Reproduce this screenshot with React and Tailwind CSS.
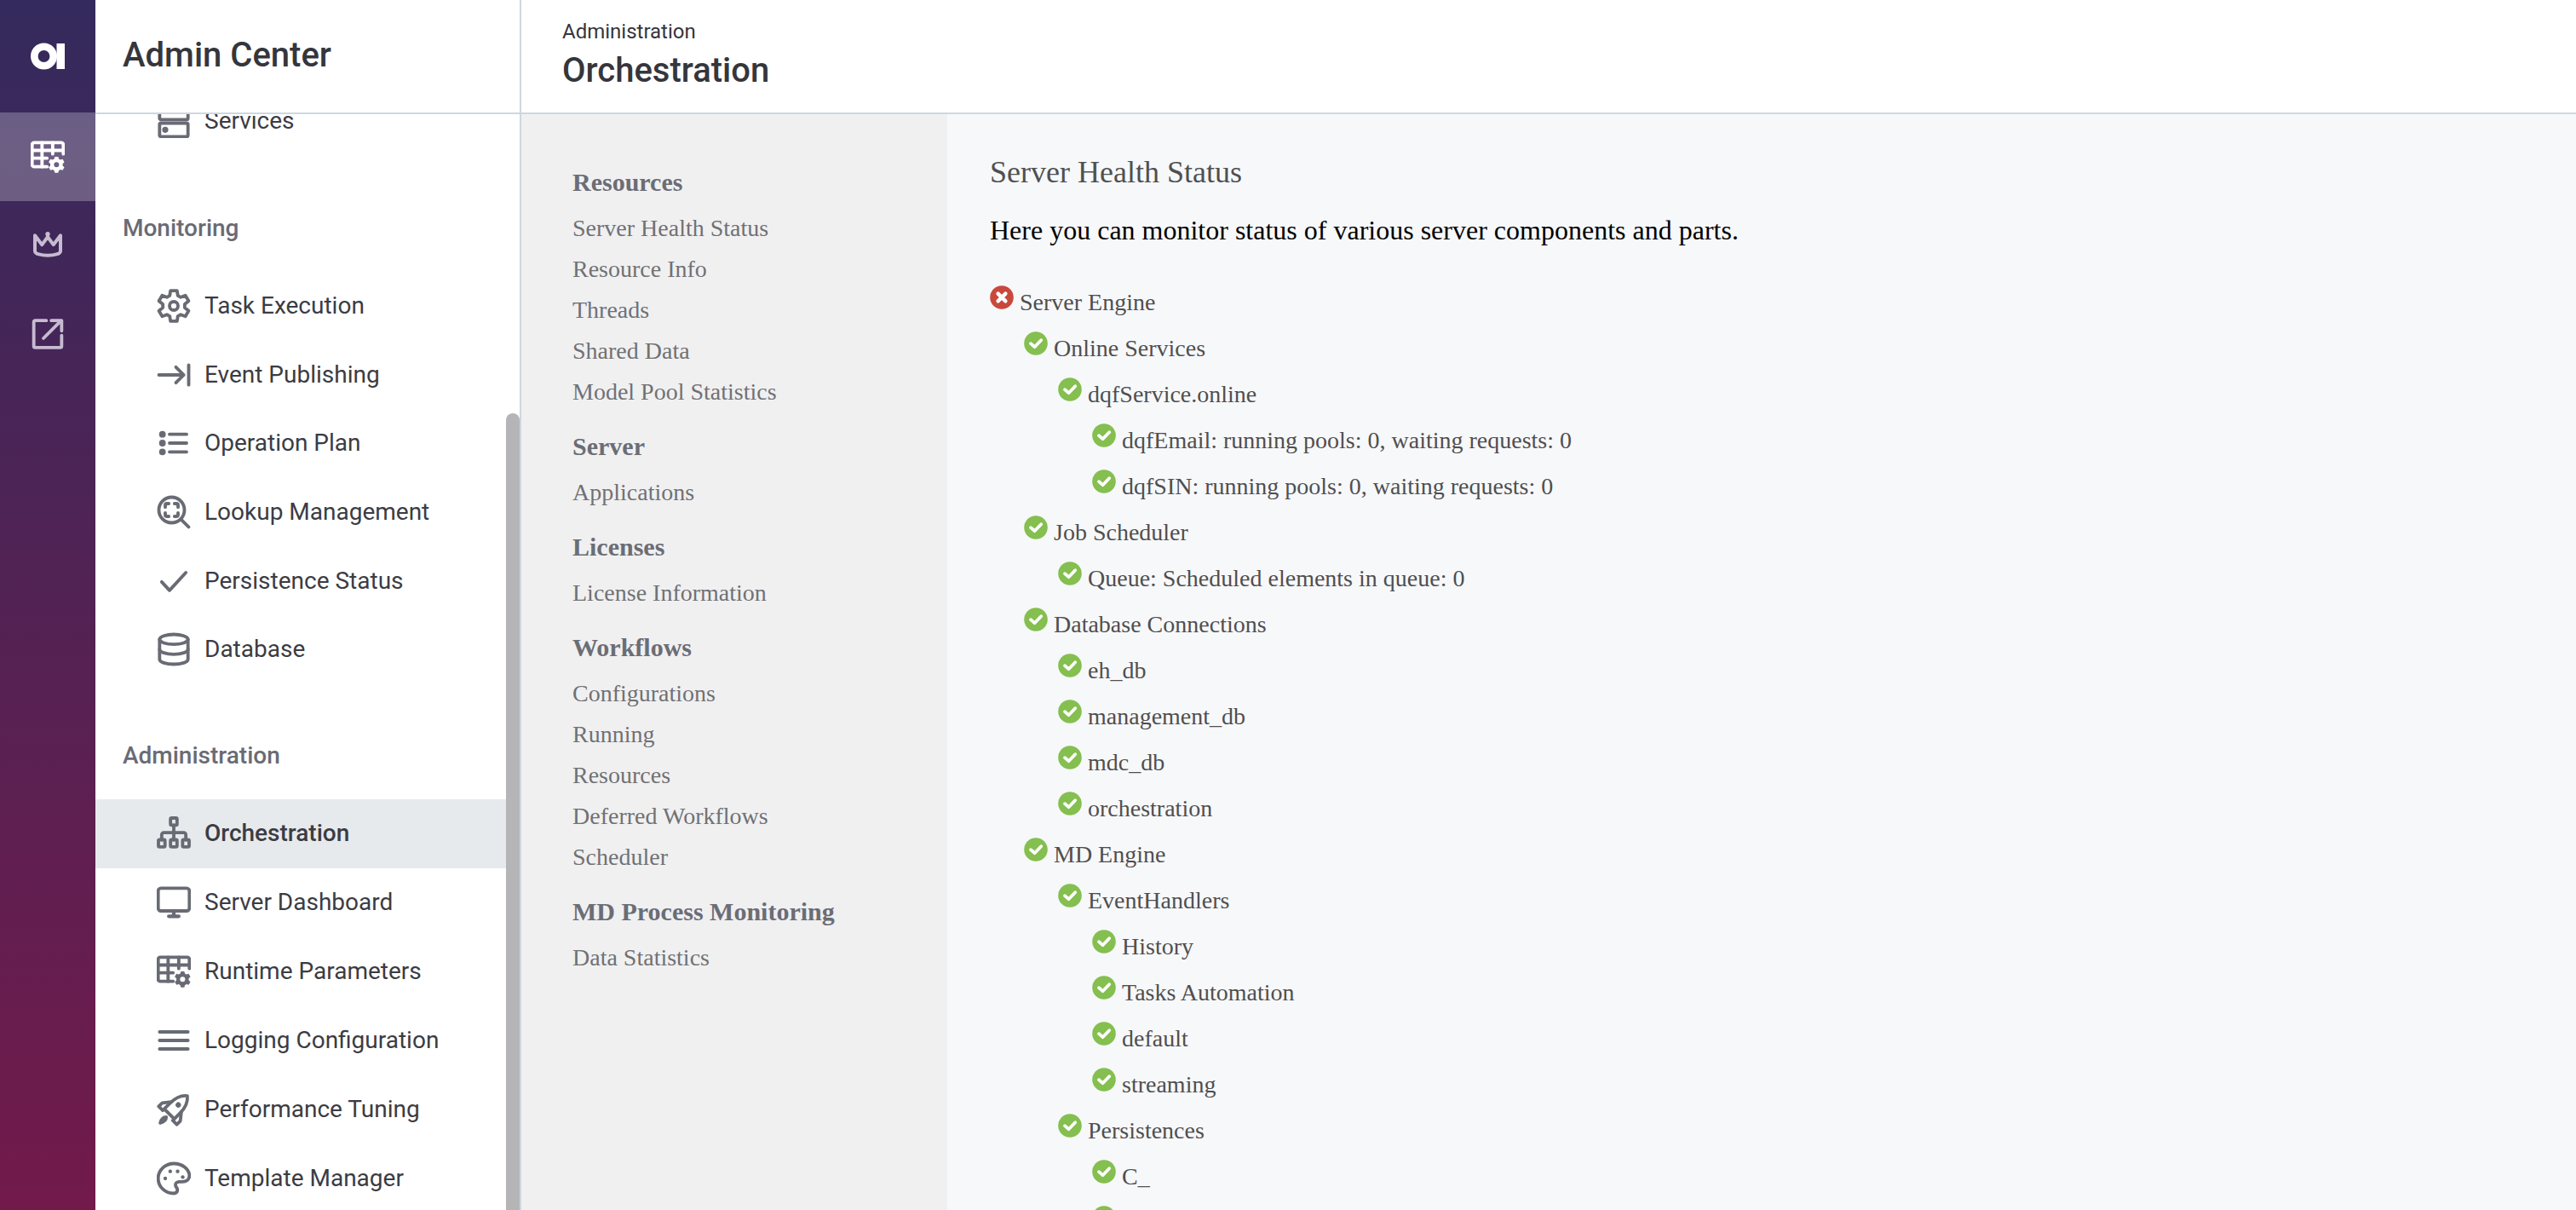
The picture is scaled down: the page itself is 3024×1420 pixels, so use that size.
import React from 'react';

// gear outline as a path, used by the sidebar icon and the table-cog icons
const gearPath = (cx, cy, outer, inner, teeth = 6) => {
  const pts = [];
  const step = (Math.PI * 2) / teeth;
  for (let i = 0; i < teeth; i++) {
    const a = -Math.PI / 2 + i * step;
    const w = step * 0.2;
    const v = step * 0.3;
    pts.push([a - w, outer], [a + w, outer], [a + v + 0.06, inner], [a + step - v - 0.06, inner]);
  }
  return (
    pts
      .map(([a, r], i) => `${i ? 'L' : 'M'}${(cx + Math.cos(a) * r).toFixed(2)} ${(cy + Math.sin(a) * r).toFixed(2)}`)
      .join(' ') + ' Z'
  );
};

const circlePath = (cx, cy, r) => `M${cx - r} ${cy}a${r} ${r} 0 1 0 ${r * 2} 0a${r} ${r} 0 1 0 ${-r * 2} 0Z`;

const Svg = ({ className = 'w-[40px] h-[40px]', children }) => (
  <svg
    viewBox="0 0 24 24"
    fill="none"
    stroke="currentColor"
    strokeWidth="2.3"
    strokeLinecap="round"
    strokeLinejoin="round"
    className={className}
  >
    {children}
  </svg>
);

const TableCogIcon = ({ className }) => (
  <Svg className={className}>
    <path d="M11.5 19H2.5a1.5 1.5 0 0 1-1.5-1.5V3.5A1.5 1.5 0 0 1 2.5 2h19A1.5 1.5 0 0 1 23 3.5V10" />
    <path d="M1 7.5H23M1 13H11.5M8 2V19M15.5 2V10" />
    <path
      d={`${gearPath(18.2, 17.6, 5.8, 4.4)} ${circlePath(18.2, 17.6, 1.8)}`}
      fill="currentColor"
      fillRule="evenodd"
      stroke="none"
    />
  </Svg>
);

const ServerIcon = () => (
  <Svg>
    <rect x="2" y="1.5" width="20" height="9.5" rx="1" />
    <rect x="2" y="13.5" width="20" height="9.5" rx="1" />
    <circle cx="6" cy="18.2" r="1" fill="currentColor" />
  </Svg>
);
const GearIcon = () => (
  <Svg>
    <path d={gearPath(12, 12, 11, 7.8)} />
    <circle cx="12" cy="12" r="3" />
  </Svg>
);
const ArrowBarIcon = () => (
  <Svg>
    <path d="M1.5 12H19M13.5 6.5L19 12L13.5 17.5M22.5 5V19" />
  </Svg>
);
const ListIcon = () => (
  <Svg>
    <path d="M9 5.8H21M9 12H21M9 18.2H21" />
    <circle cx="4" cy="5.8" r="1.2" fill="currentColor" />
    <circle cx="4" cy="12" r="1.2" fill="currentColor" />
    <circle cx="4" cy="18.2" r="1.2" fill="currentColor" />
  </Svg>
);
const LookupIcon = () => (
  <Svg>
    <circle cx="10.5" cy="10.5" r="9" />
    <path d="M17 17L22.5 22.5" />
    <path d="M6 8.5V7a1 1 0 0 1 1-1h1.5M12.5 6H14a1 1 0 0 1 1 1v1.5M15 12.5V14a1 1 0 0 1-1 1h-1.5M8.5 15H7a1 1 0 0 1-1-1v-1.5" />
  </Svg>
);
const CheckIcon = () => (
  <Svg>
    <path d="M3.5 12.5L9 18.5L20.5 6" />
  </Svg>
);
const DatabaseIcon = () => (
  <Svg>
    <ellipse cx="12" cy="5" rx="10" ry="3.5" />
    <path d="M2 5V19C2 21 6.5 22.5 12 22.5S22 21 22 19V5" />
    <path d="M2 12C2 14 6.5 15.5 12 15.5S22 14 22 12" />
  </Svg>
);
const SitemapIcon = () => (
  <Svg>
    <rect x="9.7" y="1.2" width="4.6" height="5" rx="0.8" />
    <rect x="1.2" y="16.5" width="4.6" height="5" rx="0.8" />
    <rect x="9.7" y="16.5" width="4.6" height="5" rx="0.8" />
    <rect x="18.2" y="16.5" width="4.6" height="5" rx="0.8" />
    <path d="M12 6.2V16.5M3.5 16.5V13a1.5 1.5 0 0 1 1.5-1.5H19A1.5 1.5 0 0 1 20.5 13V16.5" />
  </Svg>
);
const MonitorIcon = () => (
  <Svg>
    <rect x="1" y="2" width="22" height="16" rx="2" />
    <path d="M12 18V21.5M8.5 21.8H15.5" strokeWidth="2.6" />
  </Svg>
);
const BarsIcon = () => (
  <Svg>
    <path d="M2 6H22M2 12H22M2 18H22" />
  </Svg>
);
const RocketIcon = () => (
  <Svg>
    <g transform="rotate(45 12 12)">
      <path d="M12 -1.5C16.5 2 17 7 17 11V16.5H7V11C7 7 7.5 2 12 -1.5Z" />
      <path d="M7 9.5L3 14.5V18H7M17 9.5L21 14.5V18H17" />
      <path d="M12 19.5C10.5 21 10.5 23 12 25.5C13.5 23 13.5 21 12 19.5Z" />
      <circle cx="12" cy="7.5" r="1.9" fill="currentColor" stroke="none" />
    </g>
  </Svg>
);
const PaletteIcon = () => (
  <Svg>
    <path d="M12 1.5C5.9 1.5 1 6.2 1 12S5.9 22.5 12 22.5C13.6 22.5 14.6 21.4 14.6 20C14.6 19.3 14.3 18.8 13.9 18.3C13.5 17.8 13.2 17.2 13.2 16.6C13.2 15.3 14.3 14.3 15.8 14.3H18C20.9 14.3 23 12.6 23 10.2C23 5.4 18 1.5 12 1.5Z" />
    <circle cx="6" cy="12" r="1.3" fill="currentColor" stroke="none" />
    <circle cx="9.5" cy="7" r="1.3" fill="currentColor" stroke="none" />
    <circle cx="14.7" cy="7" r="1.3" fill="currentColor" stroke="none" />
    <circle cx="18.3" cy="11" r="1.3" fill="currentColor" stroke="none" />
  </Svg>
);

const monitoringItems = [
  { label: 'Task Execution', icon: GearIcon },
  { label: 'Event Publishing', icon: ArrowBarIcon },
  { label: 'Operation Plan', icon: ListIcon },
  { label: 'Lookup Management', icon: LookupIcon },
  { label: 'Persistence Status', icon: CheckIcon },
  { label: 'Database', icon: DatabaseIcon },
];

const adminItems = [
  { label: 'Orchestration', icon: SitemapIcon, active: true },
  { label: 'Server Dashboard', icon: MonitorIcon },
  { label: 'Runtime Parameters', icon: TableCogIcon },
  { label: 'Logging Configuration', icon: BarsIcon },
  { label: 'Performance Tuning', icon: RocketIcon },
  { label: 'Template Manager', icon: PaletteIcon },
];

const subNav = [
  { title: 'Resources', links: ['Server Health Status', 'Resource Info', 'Threads', 'Shared Data', 'Model Pool Statistics'] },
  { title: 'Server', links: ['Applications'] },
  { title: 'Licenses', links: ['License Information'] },
  { title: 'Workflows', links: ['Configurations', 'Running', 'Resources', 'Deferred Workflows', 'Scheduler'] },
  { title: 'MD Process Monitoring', links: ['Data Statistics'] },
];

const health = [
  [0, 'Server Engine', true],
  [1, 'Online Services'],
  [2, 'dqfService.online'],
  [3, 'dqfEmail: running pools: 0, waiting requests: 0'],
  [3, 'dqfSIN: running pools: 0, waiting requests: 0'],
  [1, 'Job Scheduler'],
  [2, 'Queue: Scheduled elements in queue: 0'],
  [1, 'Database Connections'],
  [2, 'eh_db'],
  [2, 'management_db'],
  [2, 'mdc_db'],
  [2, 'orchestration'],
  [1, 'MD Engine'],
  [2, 'EventHandlers'],
  [3, 'History'],
  [3, 'Tasks Automation'],
  [3, 'default'],
  [3, 'streaming'],
  [2, 'Persistences'],
  [3, 'C_'],
  [3, ''],
];

const indent = ['pl-0', 'pl-[40px]', 'pl-[80px]', 'pl-[120px]'];

const StatusIcon = ({ error }) => (
  <svg viewBox="0 0 28 28" className="w-[28px] h-[28px] mt-[7px] mr-[7px] shrink-0">
    <circle cx="14" cy="14" r="13.8" fill={error ? '#c8493b' : '#84bf4f'} />
    {error ? (
      <path d="M9.6 9.6L18.4 18.4M18.4 9.6L9.6 18.4" stroke="white" strokeWidth="4.4" strokeLinecap="round" />
    ) : (
      <path d="M8 14.2L12.5 18.2L20.2 10.2" fill="none" stroke="white" strokeWidth="3.8" strokeLinecap="round" strokeLinejoin="round" />
    )}
  </svg>
);

function NavItem({ item, height = 'h-[80.6px]' }) {
  const Icon = item.icon;
  return (
    <div className={`flex items-center pl-[72px] ${height} ${item.active ? 'bg-[#e7eaed] font-medium' : ''}`}>
      <span className="text-[#696b74] w-[56px] shrink-0">
        <Icon className="w-[40px] h-[40px]" />
      </span>
      <span className="text-[28px] leading-[40px] text-[#3b3c43]">{item.label}</span>
    </div>
  );
}

export default function App() {
  return (
    <div className="flex w-screen h-screen overflow-hidden bg-white font-['Roboto',sans-serif]">
      {/* purple rail */}
      <div className="w-[112px] shrink-0 flex flex-col bg-linear-to-b/srgb from-[#342a5d] to-[#721a4b]">
        <div className="h-[132px] flex items-center justify-center">
          <svg viewBox="0 0 40 32" className="w-[40px] h-[32px]">
            <circle cx="15.5" cy="16" r="11.2" fill="none" stroke="white" strokeWidth="8.6" />
            <rect x="30.5" y="1" width="9.5" height="30" fill="white" />
          </svg>
        </div>
        <div className="h-[104px] flex items-center justify-center bg-white/25 text-white">
          <TableCogIcon className="w-[40px] h-[40px]" />
        </div>
        <div className="h-[104px] flex items-center justify-center text-[#c6bbd1]">
          <svg viewBox="0 0 24 24" fill="none" stroke="currentColor" strokeWidth="2.4" strokeLinecap="round" strokeLinejoin="round" className="w-[40px] h-[40px]">
            <path d="M3 5L8 11.5L12 6L16 11.5L21 5V16C21 20 3 20 3 16Z" />
            <circle cx="12" cy="4" r="1.6" fill="currentColor" stroke="none" />
          </svg>
        </div>
        <div className="h-[104px] flex items-center justify-center text-[#c6bbd1]">
          <Svg>
            <path d="M11 2.5H3.2a1 1 0 0 0-1 1V20.5a1 1 0 0 0 1 1H20.8a1 1 0 0 0 1-1V13M9 15L21.5 2.5M14.5 2.5H21.8V9.8" />
          </Svg>
        </div>
      </div>

      <div className="flex-1 flex flex-col min-w-0">
        {/* top header */}
        <div className="h-[134px] shrink-0 flex border-b-2 border-[#cdd8df]">
          <div className="w-[500px] shrink-0 border-r-2 border-[#cdd8df] flex items-center pl-[32px] pb-[2px]">
            <h1 className="text-[40px] leading-[48px] font-medium text-[#35363c]">Admin Center</h1>
          </div>
          <div className="pl-[48px] pt-[21px]">
            <div className="text-[24px] leading-[32px] text-[#35363c]">Administration</div>
            <div className="text-[40px] leading-[48px] font-medium text-[#35363c] mt-[6px]">Orchestration</div>
          </div>
        </div>

        <div className="flex-1 flex min-h-0">
          {/* left nav, scrolled */}
          <div className="relative w-[500px] shrink-0 border-r-2 border-[#cdd8df] overflow-hidden">
            <div className="-mt-[32px] pr-[16px]">
              <NavItem item={{ label: 'Services', icon: ServerIcon }} height="h-[80px]" />
              <div className="pl-[32px] pt-[66px] pb-[31px] text-[28px] leading-[40px] font-medium text-[#696b74]">Monitoring</div>
              {monitoringItems.map((item) => (
                <NavItem key={item.label} item={item} />
              ))}
              <div className="pl-[32px] pt-[64px] pb-[31px] text-[28px] leading-[40px] font-medium text-[#696b74]">Administration</div>
              {adminItems.map((item) => (
                <NavItem key={item.label} item={item} height="h-[81px]" />
              ))}
            </div>
            <div className="absolute right-0 top-[351px] bottom-0 w-[16px] rounded-t-[8px] bg-[#b5b5b8]" />
          </div>

          {/* sub nav */}
          <div className="w-[500px] shrink-0 bg-[#f0f0f1] pl-[60px] pt-[56px] font-['Liberation_Serif',serif]">
            {subNav.map((section) => (
              <div key={section.title} className="mb-[16px]">
                <div className="text-[30px] leading-[48px] font-bold text-[#6b6d75] mb-[6px]">{section.title}</div>
                {section.links.map((link) => (
                  <div key={link} className="text-[28px] leading-[48px] text-[#707174]">{link}</div>
                ))}
              </div>
            ))}
          </div>

          {/* main content */}
          <div className="flex-1 bg-[#f7f8fa] pl-[50px] pt-[44px] font-['Liberation_Serif',serif]">
            <h2 className="text-[36px] leading-[48px] text-[#505050]">Server Health Status</h2>
            <p className="text-[32px] leading-[48px] text-black mt-[20px]">
              Here you can monitor status of various server components and parts.
            </p>
            <div className="mt-[34px]">
              {health.map(([depth, label, error], i) => (
                <div key={i} className={`flex h-[54px] ${indent[depth]}`}>
                  <StatusIcon error={error} />
                  <span className="text-[28px] leading-[54px] text-[#4f4f4f]">{label}</span>
                </div>
              ))}
            </div>
          </div>
        </div>
      </div>
    </div>
  );
}
